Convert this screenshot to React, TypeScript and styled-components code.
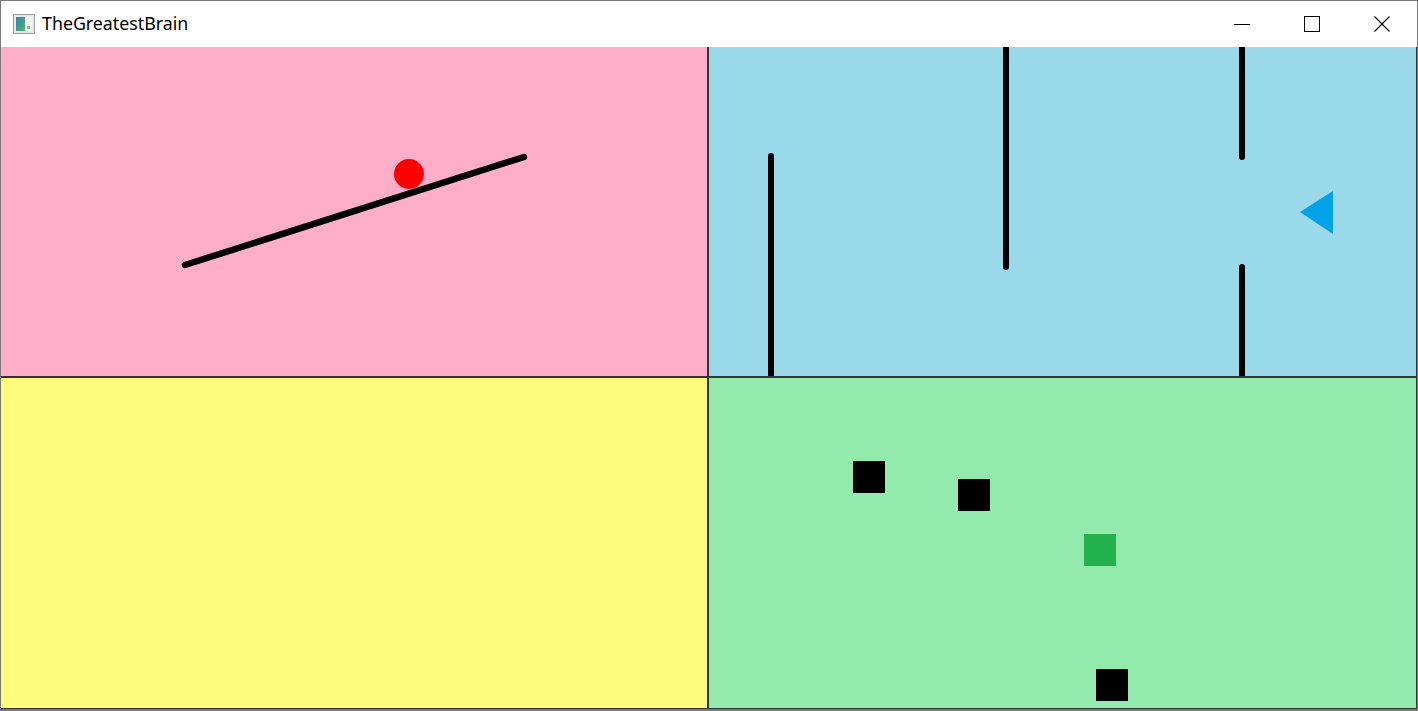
import React from "react";
import styled, { createGlobalStyle } from "styled-components";

const GlobalStyle = createGlobalStyle`
  html, body {
    margin: 0;
    padding: 0;
    background: #ffffff;
  }
`;

const Frame = styled.div`
  width: 1418px;
  height: 711px;
  box-sizing: border-box;
  border: 1px solid #7a7a7a;
  border-bottom-width: 2px;
  display: flex;
  flex-direction: column;
  overflow: hidden;
`;

const TitleBar = styled.div`
  height: 46px;
  flex: 0 0 46px;
  background: #ffffff;
  display: flex;
  align-items: center;
`;

const AppIcon = styled.div`
  width: 22px;
  height: 20px;
  margin-left: 12px;
  margin-right: 7px;
  display: flex;
`;

const Title = styled.span`
  font-family: "Noto Sans", "Open Sans", sans-serif;
  font-size: 17.8px;
  color: #000000;
  margin-top: -2px;
`;

const Controls = styled.div`
  margin-left: auto;
  display: flex;
  height: 100%;
`;

const ControlButton = styled.div`
  width: 70px;
  height: 100%;
  display: flex;
  align-items: center;
  justify-content: center;
`;

const Board = styled.div`
  flex: 0 0 662px;
  display: grid;
  grid-template-columns: 706px 707px;
  grid-template-rows: 329px 330px;
  gap: 2px;
  padding: 0 1px 1px 0;
  background: #333333;
`;

const Cell = styled.div<{ $bg: string }>`
  background: ${(p) => p.$bg};
  position: relative;
  overflow: hidden;
`;

const Canvas = styled.svg`
  display: block;
  width: 100%;
  height: 100%;
`;

const Block = ({ x, y, fill }: { x: number; y: number; fill: string }) => (
  <rect x={x} y={y} width={32} height={32} fill={fill} />
);

export default function App() {
  return (
    <>
      <GlobalStyle />
      <Frame>
        <TitleBar>
          <AppIcon>
            <svg width="22" height="20" viewBox="0 0 22 20">
              <defs>
                <linearGradient id="ig" x1="0" y1="0" x2="1" y2="1">
                  <stop offset="0" stopColor="#3a7fb8" />
                  <stop offset="1" stopColor="#4fb36a" />
                </linearGradient>
              </defs>
              <rect x="0.5" y="0.5" width="21" height="19" fill="#e8e8e8" stroke="#9a9a9a" />
              <rect x="3" y="3" width="9" height="14" fill="url(#ig)" />
              <rect x="13" y="3" width="6" height="14" fill="#f4f4f4" />
              <rect x="14" y="12" width="3" height="3" fill="#7fc48f" />
            </svg>
          </AppIcon>
          <Title>TheGreatestBrain</Title>
          <Controls>
            <ControlButton>
              <svg width="16" height="16" viewBox="0 0 16 16">
                <line x1="0" y1="8.5" x2="16" y2="8.5" stroke="#000" strokeWidth="1" />
              </svg>
            </ControlButton>
            <ControlButton>
              <svg width="16" height="16" viewBox="0 0 16 16">
                <rect x="0.5" y="0.5" width="15" height="15" fill="none" stroke="#000" strokeWidth="1" />
              </svg>
            </ControlButton>
            <ControlButton>
              <svg width="16" height="16" viewBox="0 0 16 16">
                <line x1="0.5" y1="0.5" x2="15.5" y2="15.5" stroke="#000" strokeWidth="1.1" />
                <line x1="15.5" y1="0.5" x2="0.5" y2="15.5" stroke="#000" strokeWidth="1.1" />
              </svg>
            </ControlButton>
          </Controls>
        </TitleBar>
        <Board>
          <Cell $bg="#ffaeca">
            <Canvas viewBox="0 0 706 329">
              <line x1="184" y1="218" x2="523" y2="110" stroke="#000" strokeWidth="6.5" strokeLinecap="round" />
              <circle cx="408" cy="127" r="15" fill="#ff0000" />
            </Canvas>
          </Cell>
          <Cell $bg="#99d9ea">
            <Canvas viewBox="0 0 707 329">
              <g stroke="#000" strokeWidth="6" strokeLinecap="round">
                <line x1="62" y1="109" x2="62" y2="340" />
                <line x1="297" y1="-10" x2="297" y2="220" />
                <line x1="533" y1="-10" x2="533" y2="110" />
                <line x1="533" y1="220" x2="533" y2="340" />
              </g>
              <polygon points="591,165 624,144 624,187" fill="#00a2e8" />
            </Canvas>
          </Cell>
          <Cell $bg="#fffb7d" />
          <Cell $bg="#93eaad">
            <Canvas viewBox="0 0 707 330">
              <Block x={144} y={83} fill="#000" />
              <Block x={249} y={101} fill="#000" />
              <Block x={375} y={156} fill="#22b14c" />
              <Block x={387} y={291} fill="#000" />
            </Canvas>
          </Cell>
        </Board>
      </Frame>
    </>
  );
}
